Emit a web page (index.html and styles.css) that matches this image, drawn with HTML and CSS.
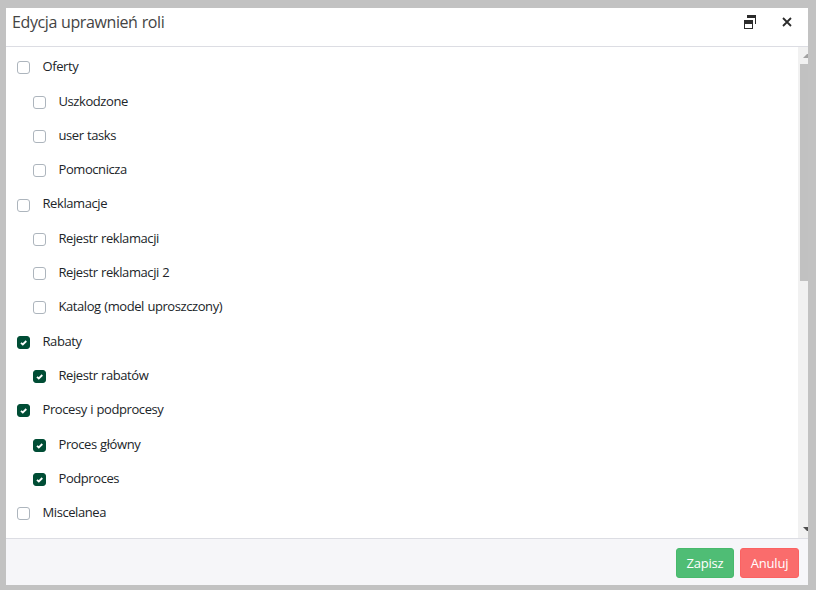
FILE: index.html
```html
<!DOCTYPE html>
<html lang="pl">

<head>
    <meta charset="UTF-8">
    <meta name="viewport" content="width=device-width, initial-scale=1.0">
    <title>Edycja uprawnień roli</title>
    <link rel="stylesheet" href="styles.css">
</head>

<body>
    <div class="dialog">
        <header class="dialog-header">
            <h1>Edycja uprawnień roli</h1>
            <div class="window-actions">
                <button type="button" class="icon-button" aria-label="Przywróć">
                    <svg width="12" height="14" viewBox="0 0 12 14" shape-rendering="crispEdges">
                        <path d="M3 0h9v9h-1V3H3z" fill="#2b2b2b"/>
                        <path d="M0 5h9v9H0zM1 9v4h7V9z" fill="#2b2b2b" fill-rule="evenodd"/>
                    </svg>
                </button>
                <button type="button" class="icon-button" aria-label="Zamknij">
                    <svg width="10" height="10" viewBox="0 0 10 10">
                        <path d="M1 1l8 8M9 1L1 9" stroke="#2b2b2b" stroke-width="1.8"/>
                    </svg>
                </button>
            </div>
        </header>

        <div class="dialog-body">
            <div class="permissions">
                <label class="row"><input type="checkbox"><span>Oferty</span></label>
                <label class="row child"><input type="checkbox"><span>Uszkodzone</span></label>
                <label class="row child"><input type="checkbox"><span>user tasks</span></label>
                <label class="row child"><input type="checkbox"><span>Pomocnicza</span></label>
                <label class="row"><input type="checkbox"><span>Reklamacje</span></label>
                <label class="row child"><input type="checkbox"><span>Rejestr reklamacji</span></label>
                <label class="row child"><input type="checkbox"><span>Rejestr reklamacji 2</span></label>
                <label class="row child"><input type="checkbox"><span>Katalog (model uproszczony)</span></label>
                <label class="row"><input type="checkbox" checked><span>Rabaty</span></label>
                <label class="row child"><input type="checkbox" checked><span>Rejestr rabatów</span></label>
                <label class="row"><input type="checkbox" checked><span>Procesy i podprocesy</span></label>
                <label class="row child"><input type="checkbox" checked><span>Proces główny</span></label>
                <label class="row child"><input type="checkbox" checked><span>Podproces</span></label>
                <label class="row"><input type="checkbox"><span>Miscelanea</span></label>
            </div>
            <div class="scrollbar">
                <svg class="arrow" width="5" height="17" viewBox="0 0 5 17">
                    <path d="M0 11L4 7h1v4z" fill="#a3a3a3"/>
                </svg>
                <div class="thumb"></div>
                <svg class="arrow arrow-down" width="5" height="17" viewBox="0 0 5 17">
                    <path d="M0 6h5v4H4z" fill="#505050"/>
                </svg>
            </div>
        </div>

        <footer class="dialog-footer">
            <button type="button" class="btn btn-save">Zapisz</button>
            <button type="button" class="btn btn-cancel">Anuluj</button>
        </footer>
    </div>
</body>

</html>
```

FILE: styles.css
```css
* {
    box-sizing: border-box;
}

body {
    margin: 0;
    height: 590px;
    padding: 8px 8px 5px 6px;
    background-color: #c2c2c2;
    font-family: "Segoe UI", "Open Sans", "Noto Sans", sans-serif;
    font-size: 13px;
    color: #212529;
    overflow: hidden;
}

.dialog {
    display: flex;
    flex-direction: column;
    height: 577px;
    background-color: #fff;
}

/* Header */
.dialog-header {
    display: flex;
    justify-content: space-between;
    height: 39px;
    padding: 0 16px 0 6px;
    border-bottom: 1px solid #dcdde3;
}

.dialog-header h1 {
    margin: 0;
    font-size: 16px;
    font-weight: 400;
    line-height: 29px;
    letter-spacing: -0.4px;
    word-spacing: 0.4px;
    color: #444;
}

.window-actions {
    display: flex;
    align-items: center;
    gap: 26px;
    height: 28px;
}

.icon-button {
    display: flex;
    padding: 0;
    border: 0;
    background: none;
}

/* Permission list */
.dialog-body {
    display: flex;
    flex: 1;
    min-height: 0;
}

.permissions {
    flex: 1;
    padding: 3px 0 0 11px;
    overflow: hidden;
}

.row {
    display: flex;
    align-items: center;
    gap: 12.5px;
    height: 34.31px;
    letter-spacing: -0.42px;
    word-spacing: 0.5px;
}

.row span {
    margin-top: -1.8px;
}

.child {
    padding-left: 16px;
}

input[type="checkbox"] {
    appearance: none;
    width: 13px;
    height: 13px;
    margin: 1.4px 0 0;
    border: 1px solid #adb5bd;
    border-radius: 3px;
    background-color: #fff;
}

input[type="checkbox"]:checked {
    border-color: #004d35;
    background: #004d35 url("data:image/svg+xml,%3Csvg xmlns='http://www.w3.org/2000/svg' viewBox='0 0 11 11'%3E%3Cpath d='M3 5.8l1.8 1.7L8.3 4' fill='none' stroke='%23fff' stroke-width='1.8'/%3E%3C/svg%3E") center / 11px no-repeat;
}

.scrollbar {
    display: flex;
    flex-direction: column;
    width: 10px;
    padding-left: 2px;
    background-color: #f1f1f1;
}

.arrow {
    flex: none;
    align-self: flex-end;
}

.arrow-down {
    margin-top: auto;
}

.thumb {
    height: 217px;
    background-color: #c1c1c1;
}

/* Footer */
.dialog-footer {
    display: flex;
    justify-content: flex-end;
    gap: 6px;
    height: 47px;
    padding: 9px 9px 0 0;
    border-top: 1px solid #dcdde3;
    background-color: #f6f6f9;
}

.btn {
    height: 30px;
    padding: 0;
    border: 1px solid;
    border-radius: 3px;
    color: #fff;
    font-family: inherit;
    font-size: 13px;
    letter-spacing: -0.2px;
}

.btn-save {
    width: 58px;
    border-color: #48b96c;
    background-color: #4fbd75;
}

.btn-cancel {
    width: 59px;
    border-color: #fb6262;
    background-color: #fa6c6c;
}
```
